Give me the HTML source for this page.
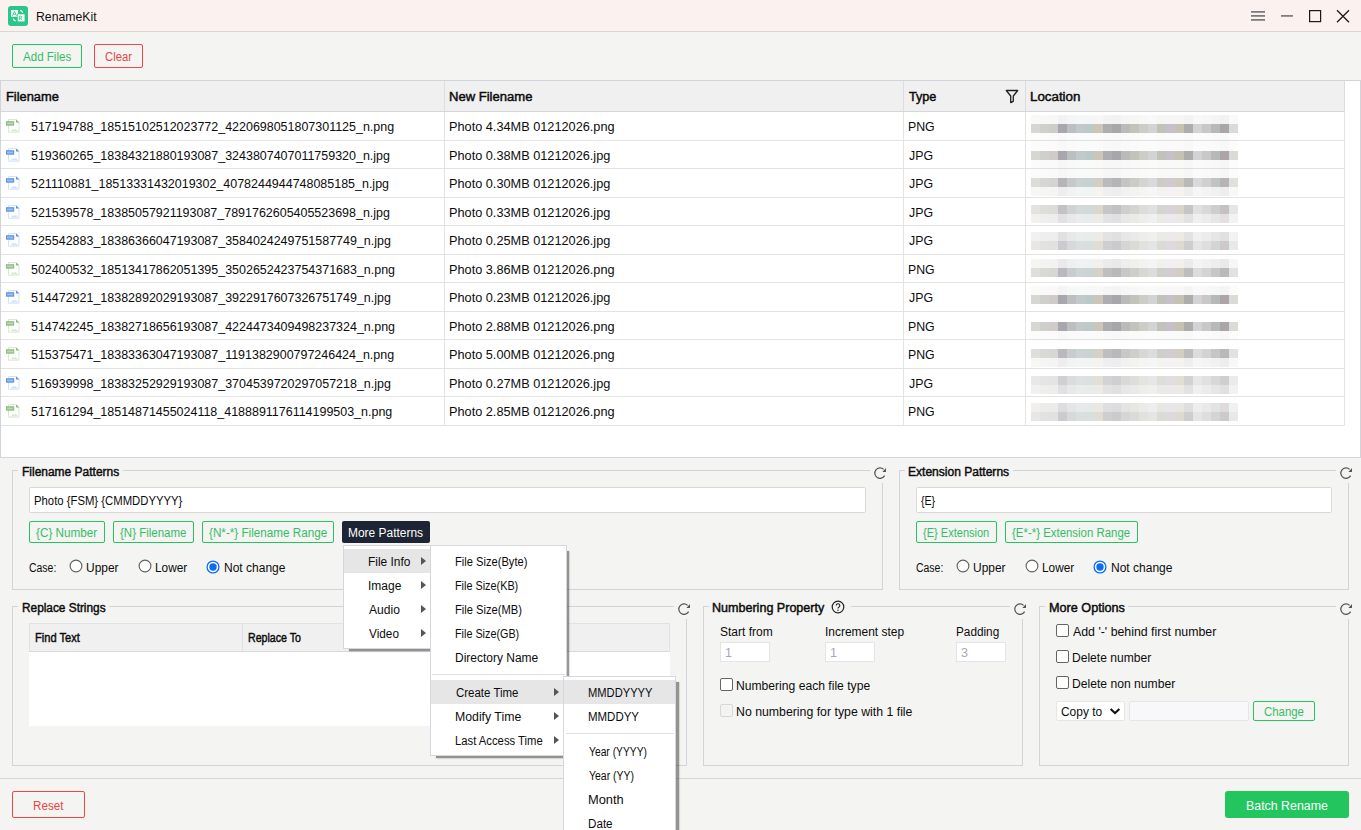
<!DOCTYPE html>
<html><head><meta charset="utf-8"><title>RenameKit</title><style>
*{margin:0;padding:0;box-sizing:border-box}
html,body{width:1361px;height:830px;overflow:hidden}
body{background:#f4f4f2;font-family:"Liberation Sans",sans-serif;font-size:12.5px;color:#0c0c0c;position:relative}
.a{position:absolute}
.t{position:absolute;white-space:nowrap;line-height:16px;transform-origin:0 0}
.b{font-weight:normal;-webkit-text-stroke:.45px currentColor}
.g{color:#3dba6c}
.btn{position:absolute;border:1px solid #25c460;border-radius:2px;color:#3fb96b;text-align:center;white-space:nowrap}
.red{border-color:#ee4646;color:#e84848}
.hl{background:#e6e6e6}
.gb{position:absolute;border:1px solid #d2d2d6;border-radius:1px}
.gbt{position:absolute;background:#f4f4f2;padding:0 5px 0 5px;font-weight:bold;line-height:16px;white-space:nowrap}
.vl{position:absolute;width:1px}
.hlin{position:absolute;height:1px}
.menu{position:absolute;background:#fff;border:1px solid #d6d6dc}
.shd{position:absolute;background:rgba(50,50,50,.5);box-shadow:0 0 1.5px 0.5px rgba(50,50,50,.45)}
.arr{position:absolute;width:0;height:0;border-top:4px solid transparent;border-bottom:4px solid transparent;border-left:5px solid #555}
.inp{position:absolute;background:#fff;border:1px solid #dcd8d6;border-radius:2px}
.radio{position:absolute;width:13px;height:13px;border-radius:50%;border:1px solid #5a5a5a;background:#fff}
.cb{position:absolute;width:13px;height:13px;border:1px solid #4a4a4a;border-radius:2px;background:#fff}
.refresh{position:absolute;width:14px;height:14px}
</style></head><body>
<div class="a" style="left:0;top:0;width:1361px;height:31px;background:#fbf1ee"></div>
<div class="hlin" style="left:0;top:31px;width:1361px;background:#d9d6d5"></div>
<svg class="a" style="left:8px;top:6px" width="20" height="20" viewBox="0 0 20 20">
<rect x="0" y="0" width="20" height="20" rx="3" fill="#2bc68c"/>
<rect x="3" y="4.1" width="7" height="6.6" fill="#fff"/>
<rect x="9.3" y="8" width="7.6" height="7.8" fill="#fff" stroke="#2bc68c" stroke-width=".6"/>
<path d="M4.4 9.8L6.5 5.3L8.6 9.8M5.3 8.3h2.4" stroke="#2bc68c" stroke-width=".85" fill="none"/>
<path d="M11.3 14.1V10.2h1.5a1 1 0 0 1 0 2h-1.5M12.8 12.2l1.1 1.9" stroke="#2bc68c" stroke-width=".85" fill="none"/>
<path d="M12.2 4.4Q14.3 4.9 14.8 6.9" stroke="#fff" stroke-width="1.1" fill="none"/>
<path d="M5.3 12.6Q5.6 14.6 7.8 15" stroke="#fff" stroke-width="1.1" fill="none"/>
</svg>
<div class="t " style="left:35.82px;top:8.92px;transform:scaleX(0.9811);color:#111">RenameKit</div>
<svg class="a" style="left:1245px;top:4px" width="116" height="24" viewBox="1245 4 116 24">
<path d="M1251 11.9h14M1251 15.9h14M1251 19.9h14" stroke="#7a7a7a" stroke-width="1.7"/>
<path d="M1281 15.9h12" stroke="#7a7a7a" stroke-width="1.7"/>
<rect x="1309.6" y="10.6" width="11" height="11" stroke="#1a1a1a" stroke-width="1.2" fill="none"/>
<path d="M1337 10.2L1349 22.2M1349 10.2L1337 22.2" stroke="#1a1a1a" stroke-width="1.3"/>
</svg>
<div class="btn" style="left:12px;top:44px;width:70px;height:24px"></div>
<div class="t " style="left:23.25px;top:49.12px;transform:scaleX(0.9256);color:#34be66">Add Files</div>
<div class="btn red" style="left:94px;top:44px;width:49px;height:24px"></div>
<div class="t " style="left:105.25px;top:49.12px;transform:scaleX(0.9004);color:#e84646">Clear</div>
<div class="a" style="left:0;top:80px;width:1361px;height:378px;background:#fff;border:1px solid #d3d3da"></div>
<div class="a" style="left:1px;top:81px;width:1343px;height:30px;background:#f0f0f0"></div>
<div class="hlin" style="left:1px;top:111px;width:1344px;background:#d6d6d9"></div>
<div class="vl" style="left:444px;top:81px;height:30px;background:#dddde0"></div>
<div class="vl" style="left:903px;top:81px;height:30px;background:#dddde0"></div>
<div class="vl" style="left:1025px;top:81px;height:30px;background:#dddde0"></div>
<div class="vl" style="left:1344px;top:81px;height:30px;background:#dddde0"></div>
<div class="t b" style="left:5.67px;top:88.67px;transform:scaleX(1.0286);">Filename</div>
<div class="t b" style="left:448.96px;top:88.67px;transform:scaleX(1.0439);">New Filename</div>
<div class="t b" style="left:908.60px;top:88.67px;transform:scaleX(1.0093);">Type</div>
<div class="t b" style="left:1029.93px;top:88.67px;transform:scaleX(1.0668);">Location</div>
<svg class="a" style="left:1004px;top:88px" width="16" height="16" viewBox="0 0 16 16"><path d="M2.3 2.5h11.4L9.3 8v5.3L6.7 14.6V8z" stroke="#222" stroke-width="1.3" fill="none" stroke-linejoin="round"/></svg>
<div class="hlin" style="left:1px;top:140px;width:1344px;background:#e3e3e3"></div>
<div class="vl" style="left:444px;top:112px;height:28px;background:#e3e3e3"></div>
<div class="vl" style="left:903px;top:112px;height:28px;background:#e3e3e3"></div>
<div class="vl" style="left:1025px;top:112px;height:28px;background:#e3e3e3"></div>
<div class="vl" style="left:1344px;top:112px;height:28px;background:#e3e3e3"></div>
<div class="a" style="left:5px;top:119px;width:15px;height:15px"><svg width="15" height="15" viewBox="0 0 15 15"><path d="M3.5 0.5h7.5l3 3v9.7h-10.5z" fill="#fff" stroke="#d8e9d2" stroke-width="1"/><path d="M11 0.2v3.3h3.3z" fill="#8dbd7c"/><rect x="1" y="2.2" width="8.2" height="4.5" fill="#8dbd7c"/><rect x="2" y="3.5" width="6.2" height="1.9" fill="#fff" opacity=".4"/><path d="M5.5 12.6l2.5-2.6 1.3 1.1 1.5-1.4 2.2 2.9z" fill="#d8e9d2"/></svg></div>
<div class="t " style="left:30.65px;top:118.67px;transform:scaleX(0.9974);">517194788_18515102512023772_4220698051807301125_n.png</div>
<div class="t " style="left:449.28px;top:118.67px;transform:scaleX(1.0180);">Photo 4.34MB 01212026.png</div>
<div class="t " style="left:908.01px;top:118.67px;transform:scaleX(0.9856);">PNG</div>
<div class="a" style="left:1031px;top:115px;width:207px;height:9px;background:linear-gradient(90deg,#d8d6d2 0px,#d8d6d2 9px,#cfd0cb 9px,#cfd0cb 18px,#cfcbcb 18px,#cfcbcb 27px,#a9a7ad 27px,#a9a7ad 36px,#bbbfc0 36px,#bbbfc0 45px,#c3c8ca 45px,#c3c8ca 54px,#bccac7 54px,#bccac7 63px,#cbc6b8 63px,#cbc6b8 72px,#aeaeb1 72px,#aeaeb1 81px,#a9a6aa 81px,#a9a6aa 90px,#b8bbba 90px,#b8bbba 99px,#c3c2bb 99px,#c3c2bb 108px,#cdcdc8 108px,#cdcdc8 117px,#d2d3d5 117px,#d2d3d5 126px,#c3c2ba 126px,#c3c2ba 135px,#c8c0c8 135px,#c8c0c8 144px,#c6c2b2 144px,#c6c2b2 153px,#aeadac 153px,#aeadac 162px,#d3d3d5 162px,#d3d3d5 171px,#c8c8c8 171px,#c8c8c8 180px,#b5b9b8 180px,#b5b9b8 189px,#aba5a9 189px,#aba5a9 198px,#dadbd7 198px,#dadbd7 207px);opacity:0.15"></div>
<div class="a" style="left:1031px;top:124px;width:207px;height:9px;background:linear-gradient(90deg,#d8d6d2 0px,#d8d6d2 9px,#cfd0cb 9px,#cfd0cb 18px,#cfcbcb 18px,#cfcbcb 27px,#a9a7ad 27px,#a9a7ad 36px,#bbbfc0 36px,#bbbfc0 45px,#c3c8ca 45px,#c3c8ca 54px,#bccac7 54px,#bccac7 63px,#cbc6b8 63px,#cbc6b8 72px,#aeaeb1 72px,#aeaeb1 81px,#a9a6aa 81px,#a9a6aa 90px,#b8bbba 90px,#b8bbba 99px,#c3c2bb 99px,#c3c2bb 108px,#cdcdc8 108px,#cdcdc8 117px,#d2d3d5 117px,#d2d3d5 126px,#c3c2ba 126px,#c3c2ba 135px,#c8c0c8 135px,#c8c0c8 144px,#c6c2b2 144px,#c6c2b2 153px,#aeadac 153px,#aeadac 162px,#d3d3d5 162px,#d3d3d5 171px,#c8c8c8 171px,#c8c8c8 180px,#b5b9b8 180px,#b5b9b8 189px,#aba5a9 189px,#aba5a9 198px,#dadbd7 198px,#dadbd7 207px);opacity:1.0"></div>
<div class="a" style="left:1031px;top:133px;width:207px;height:9px;background:linear-gradient(90deg,#d8d6d2 0px,#d8d6d2 9px,#cfd0cb 9px,#cfd0cb 18px,#cfcbcb 18px,#cfcbcb 27px,#a9a7ad 27px,#a9a7ad 36px,#bbbfc0 36px,#bbbfc0 45px,#c3c8ca 45px,#c3c8ca 54px,#bccac7 54px,#bccac7 63px,#cbc6b8 63px,#cbc6b8 72px,#aeaeb1 72px,#aeaeb1 81px,#a9a6aa 81px,#a9a6aa 90px,#b8bbba 90px,#b8bbba 99px,#c3c2bb 99px,#c3c2bb 108px,#cdcdc8 108px,#cdcdc8 117px,#d2d3d5 117px,#d2d3d5 126px,#c3c2ba 126px,#c3c2ba 135px,#c8c0c8 135px,#c8c0c8 144px,#c6c2b2 144px,#c6c2b2 153px,#aeadac 153px,#aeadac 162px,#d3d3d5 162px,#d3d3d5 171px,#c8c8c8 171px,#c8c8c8 180px,#b5b9b8 180px,#b5b9b8 189px,#aba5a9 189px,#aba5a9 198px,#dadbd7 198px,#dadbd7 207px);opacity:0.07"></div>
<div class="hlin" style="left:1px;top:168px;width:1344px;background:#e3e3e3"></div>
<div class="vl" style="left:444px;top:141px;height:27px;background:#e3e3e3"></div>
<div class="vl" style="left:903px;top:141px;height:27px;background:#e3e3e3"></div>
<div class="vl" style="left:1025px;top:141px;height:27px;background:#e3e3e3"></div>
<div class="vl" style="left:1344px;top:141px;height:27px;background:#e3e3e3"></div>
<div class="a" style="left:5px;top:148px;width:15px;height:15px"><svg width="15" height="15" viewBox="0 0 15 15"><path d="M3.5 0.5h7.5l3 3v9.7h-10.5z" fill="#fff" stroke="#d3e2f8" stroke-width="1"/><path d="M11 0.2v3.3h3.3z" fill="#5d93e4"/><rect x="1" y="2.2" width="8.2" height="4.5" fill="#5d93e4"/><rect x="2" y="3.5" width="6.2" height="1.9" fill="#fff" opacity=".4"/><path d="M5.5 12.6l2.5-2.6 1.3 1.1 1.5-1.4 2.2 2.9z" fill="#d3e2f8"/></svg></div>
<div class="t " style="left:30.65px;top:147.67px;transform:scaleX(0.9974);">519360265_18384321880193087_3243807407011759320_n.jpg</div>
<div class="t " style="left:449.28px;top:147.67px;transform:scaleX(1.0180);">Photo 0.38MB 01212026.jpg</div>
<div class="t " style="left:909.00px;top:147.67px;transform:scaleX(0.9856);">JPG</div>
<div class="a" style="left:1031px;top:142px;width:207px;height:9px;background:linear-gradient(90deg,#d8d6d2 0px,#d8d6d2 9px,#cfd0cb 9px,#cfd0cb 18px,#cfcbcb 18px,#cfcbcb 27px,#a9a7ad 27px,#a9a7ad 36px,#bbbfc0 36px,#bbbfc0 45px,#c3c8ca 45px,#c3c8ca 54px,#bccac7 54px,#bccac7 63px,#cbc6b8 63px,#cbc6b8 72px,#aeaeb1 72px,#aeaeb1 81px,#a9a6aa 81px,#a9a6aa 90px,#b8bbba 90px,#b8bbba 99px,#c3c2bb 99px,#c3c2bb 108px,#cdcdc8 108px,#cdcdc8 117px,#d2d3d5 117px,#d2d3d5 126px,#c3c2ba 126px,#c3c2ba 135px,#c8c0c8 135px,#c8c0c8 144px,#c6c2b2 144px,#c6c2b2 153px,#aeadac 153px,#aeadac 162px,#d3d3d5 162px,#d3d3d5 171px,#c8c8c8 171px,#c8c8c8 180px,#b5b9b8 180px,#b5b9b8 189px,#aba5a9 189px,#aba5a9 198px,#dadbd7 198px,#dadbd7 207px);opacity:0.08"></div>
<div class="a" style="left:1031px;top:151px;width:207px;height:9px;background:linear-gradient(90deg,#d8d6d2 0px,#d8d6d2 9px,#cfd0cb 9px,#cfd0cb 18px,#cfcbcb 18px,#cfcbcb 27px,#a9a7ad 27px,#a9a7ad 36px,#bbbfc0 36px,#bbbfc0 45px,#c3c8ca 45px,#c3c8ca 54px,#bccac7 54px,#bccac7 63px,#cbc6b8 63px,#cbc6b8 72px,#aeaeb1 72px,#aeaeb1 81px,#a9a6aa 81px,#a9a6aa 90px,#b8bbba 90px,#b8bbba 99px,#c3c2bb 99px,#c3c2bb 108px,#cdcdc8 108px,#cdcdc8 117px,#d2d3d5 117px,#d2d3d5 126px,#c3c2ba 126px,#c3c2ba 135px,#c8c0c8 135px,#c8c0c8 144px,#c6c2b2 144px,#c6c2b2 153px,#aeadac 153px,#aeadac 162px,#d3d3d5 162px,#d3d3d5 171px,#c8c8c8 171px,#c8c8c8 180px,#b5b9b8 180px,#b5b9b8 189px,#aba5a9 189px,#aba5a9 198px,#dadbd7 198px,#dadbd7 207px);opacity:1.0"></div>
<div class="a" style="left:1031px;top:160px;width:207px;height:9px;background:linear-gradient(90deg,#d8d6d2 0px,#d8d6d2 9px,#cfd0cb 9px,#cfd0cb 18px,#cfcbcb 18px,#cfcbcb 27px,#a9a7ad 27px,#a9a7ad 36px,#bbbfc0 36px,#bbbfc0 45px,#c3c8ca 45px,#c3c8ca 54px,#bccac7 54px,#bccac7 63px,#cbc6b8 63px,#cbc6b8 72px,#aeaeb1 72px,#aeaeb1 81px,#a9a6aa 81px,#a9a6aa 90px,#b8bbba 90px,#b8bbba 99px,#c3c2bb 99px,#c3c2bb 108px,#cdcdc8 108px,#cdcdc8 117px,#d2d3d5 117px,#d2d3d5 126px,#c3c2ba 126px,#c3c2ba 135px,#c8c0c8 135px,#c8c0c8 144px,#c6c2b2 144px,#c6c2b2 153px,#aeadac 153px,#aeadac 162px,#d3d3d5 162px,#d3d3d5 171px,#c8c8c8 171px,#c8c8c8 180px,#b5b9b8 180px,#b5b9b8 189px,#aba5a9 189px,#aba5a9 198px,#dadbd7 198px,#dadbd7 207px);opacity:0.1"></div>
<div class="hlin" style="left:1px;top:197px;width:1344px;background:#e3e3e3"></div>
<div class="vl" style="left:444px;top:169px;height:28px;background:#e3e3e3"></div>
<div class="vl" style="left:903px;top:169px;height:28px;background:#e3e3e3"></div>
<div class="vl" style="left:1025px;top:169px;height:28px;background:#e3e3e3"></div>
<div class="vl" style="left:1344px;top:169px;height:28px;background:#e3e3e3"></div>
<div class="a" style="left:5px;top:176px;width:15px;height:15px"><svg width="15" height="15" viewBox="0 0 15 15"><path d="M3.5 0.5h7.5l3 3v9.7h-10.5z" fill="#fff" stroke="#d3e2f8" stroke-width="1"/><path d="M11 0.2v3.3h3.3z" fill="#5d93e4"/><rect x="1" y="2.2" width="8.2" height="4.5" fill="#5d93e4"/><rect x="2" y="3.5" width="6.2" height="1.9" fill="#fff" opacity=".4"/><path d="M5.5 12.6l2.5-2.6 1.3 1.1 1.5-1.4 2.2 2.9z" fill="#d3e2f8"/></svg></div>
<div class="t " style="left:30.65px;top:175.67px;transform:scaleX(0.9974);">521110881_18513331432019302_4078244944748085185_n.jpg</div>
<div class="t " style="left:449.28px;top:175.67px;transform:scaleX(1.0180);">Photo 0.30MB 01212026.jpg</div>
<div class="t " style="left:909.00px;top:175.67px;transform:scaleX(0.9856);">JPG</div>
<div class="a" style="left:1031px;top:169px;width:207px;height:9px;background:linear-gradient(90deg,#d8d6d2 0px,#d8d6d2 9px,#cfd0cb 9px,#cfd0cb 18px,#cfcbcb 18px,#cfcbcb 27px,#a9a7ad 27px,#a9a7ad 36px,#bbbfc0 36px,#bbbfc0 45px,#c3c8ca 45px,#c3c8ca 54px,#bccac7 54px,#bccac7 63px,#cbc6b8 63px,#cbc6b8 72px,#aeaeb1 72px,#aeaeb1 81px,#a9a6aa 81px,#a9a6aa 90px,#b8bbba 90px,#b8bbba 99px,#c3c2bb 99px,#c3c2bb 108px,#cdcdc8 108px,#cdcdc8 117px,#d2d3d5 117px,#d2d3d5 126px,#c3c2ba 126px,#c3c2ba 135px,#c8c0c8 135px,#c8c0c8 144px,#c6c2b2 144px,#c6c2b2 153px,#aeadac 153px,#aeadac 162px,#d3d3d5 162px,#d3d3d5 171px,#c8c8c8 171px,#c8c8c8 180px,#b5b9b8 180px,#b5b9b8 189px,#aba5a9 189px,#aba5a9 198px,#dadbd7 198px,#dadbd7 207px);opacity:0.1"></div>
<div class="a" style="left:1031px;top:178px;width:207px;height:9px;background:linear-gradient(90deg,#d8d6d2 0px,#d8d6d2 9px,#cfd0cb 9px,#cfd0cb 18px,#cfcbcb 18px,#cfcbcb 27px,#a9a7ad 27px,#a9a7ad 36px,#bbbfc0 36px,#bbbfc0 45px,#c3c8ca 45px,#c3c8ca 54px,#bccac7 54px,#bccac7 63px,#cbc6b8 63px,#cbc6b8 72px,#aeaeb1 72px,#aeaeb1 81px,#a9a6aa 81px,#a9a6aa 90px,#b8bbba 90px,#b8bbba 99px,#c3c2bb 99px,#c3c2bb 108px,#cdcdc8 108px,#cdcdc8 117px,#d2d3d5 117px,#d2d3d5 126px,#c3c2ba 126px,#c3c2ba 135px,#c8c0c8 135px,#c8c0c8 144px,#c6c2b2 144px,#c6c2b2 153px,#aeadac 153px,#aeadac 162px,#d3d3d5 162px,#d3d3d5 171px,#c8c8c8 171px,#c8c8c8 180px,#b5b9b8 180px,#b5b9b8 189px,#aba5a9 189px,#aba5a9 198px,#dadbd7 198px,#dadbd7 207px);opacity:0.85"></div>
<div class="a" style="left:1031px;top:187px;width:207px;height:9px;background:linear-gradient(90deg,#d8d6d2 0px,#d8d6d2 9px,#cfd0cb 9px,#cfd0cb 18px,#cfcbcb 18px,#cfcbcb 27px,#a9a7ad 27px,#a9a7ad 36px,#bbbfc0 36px,#bbbfc0 45px,#c3c8ca 45px,#c3c8ca 54px,#bccac7 54px,#bccac7 63px,#cbc6b8 63px,#cbc6b8 72px,#aeaeb1 72px,#aeaeb1 81px,#a9a6aa 81px,#a9a6aa 90px,#b8bbba 90px,#b8bbba 99px,#c3c2bb 99px,#c3c2bb 108px,#cdcdc8 108px,#cdcdc8 117px,#d2d3d5 117px,#d2d3d5 126px,#c3c2ba 126px,#c3c2ba 135px,#c8c0c8 135px,#c8c0c8 144px,#c6c2b2 144px,#c6c2b2 153px,#aeadac 153px,#aeadac 162px,#d3d3d5 162px,#d3d3d5 171px,#c8c8c8 171px,#c8c8c8 180px,#b5b9b8 180px,#b5b9b8 189px,#aba5a9 189px,#aba5a9 198px,#dadbd7 198px,#dadbd7 207px);opacity:0.2"></div>
<div class="hlin" style="left:1px;top:225px;width:1344px;background:#e3e3e3"></div>
<div class="vl" style="left:444px;top:198px;height:27px;background:#e3e3e3"></div>
<div class="vl" style="left:903px;top:198px;height:27px;background:#e3e3e3"></div>
<div class="vl" style="left:1025px;top:198px;height:27px;background:#e3e3e3"></div>
<div class="vl" style="left:1344px;top:198px;height:27px;background:#e3e3e3"></div>
<div class="a" style="left:5px;top:205px;width:15px;height:15px"><svg width="15" height="15" viewBox="0 0 15 15"><path d="M3.5 0.5h7.5l3 3v9.7h-10.5z" fill="#fff" stroke="#d3e2f8" stroke-width="1"/><path d="M11 0.2v3.3h3.3z" fill="#5d93e4"/><rect x="1" y="2.2" width="8.2" height="4.5" fill="#5d93e4"/><rect x="2" y="3.5" width="6.2" height="1.9" fill="#fff" opacity=".4"/><path d="M5.5 12.6l2.5-2.6 1.3 1.1 1.5-1.4 2.2 2.9z" fill="#d3e2f8"/></svg></div>
<div class="t " style="left:30.65px;top:204.67px;transform:scaleX(0.9974);">521539578_18385057921193087_7891762605405523698_n.jpg</div>
<div class="t " style="left:449.28px;top:204.67px;transform:scaleX(1.0180);">Photo 0.33MB 01212026.jpg</div>
<div class="t " style="left:909.00px;top:204.67px;transform:scaleX(0.9856);">JPG</div>
<div class="a" style="left:1031px;top:205px;width:207px;height:9px;background:linear-gradient(90deg,#d8d6d2 0px,#d8d6d2 9px,#cfd0cb 9px,#cfd0cb 18px,#cfcbcb 18px,#cfcbcb 27px,#a9a7ad 27px,#a9a7ad 36px,#bbbfc0 36px,#bbbfc0 45px,#c3c8ca 45px,#c3c8ca 54px,#bccac7 54px,#bccac7 63px,#cbc6b8 63px,#cbc6b8 72px,#aeaeb1 72px,#aeaeb1 81px,#a9a6aa 81px,#a9a6aa 90px,#b8bbba 90px,#b8bbba 99px,#c3c2bb 99px,#c3c2bb 108px,#cdcdc8 108px,#cdcdc8 117px,#d2d3d5 117px,#d2d3d5 126px,#c3c2ba 126px,#c3c2ba 135px,#c8c0c8 135px,#c8c0c8 144px,#c6c2b2 144px,#c6c2b2 153px,#aeadac 153px,#aeadac 162px,#d3d3d5 162px,#d3d3d5 171px,#c8c8c8 171px,#c8c8c8 180px,#b5b9b8 180px,#b5b9b8 189px,#aba5a9 189px,#aba5a9 198px,#dadbd7 198px,#dadbd7 207px);opacity:0.7"></div>
<div class="a" style="left:1031px;top:214px;width:207px;height:9px;background:linear-gradient(90deg,#d8d6d2 0px,#d8d6d2 9px,#cfd0cb 9px,#cfd0cb 18px,#cfcbcb 18px,#cfcbcb 27px,#a9a7ad 27px,#a9a7ad 36px,#bbbfc0 36px,#bbbfc0 45px,#c3c8ca 45px,#c3c8ca 54px,#bccac7 54px,#bccac7 63px,#cbc6b8 63px,#cbc6b8 72px,#aeaeb1 72px,#aeaeb1 81px,#a9a6aa 81px,#a9a6aa 90px,#b8bbba 90px,#b8bbba 99px,#c3c2bb 99px,#c3c2bb 108px,#cdcdc8 108px,#cdcdc8 117px,#d2d3d5 117px,#d2d3d5 126px,#c3c2ba 126px,#c3c2ba 135px,#c8c0c8 135px,#c8c0c8 144px,#c6c2b2 144px,#c6c2b2 153px,#aeadac 153px,#aeadac 162px,#d3d3d5 162px,#d3d3d5 171px,#c8c8c8 171px,#c8c8c8 180px,#b5b9b8 180px,#b5b9b8 189px,#aba5a9 189px,#aba5a9 198px,#dadbd7 198px,#dadbd7 207px);opacity:0.35"></div>
<div class="hlin" style="left:1px;top:254px;width:1344px;background:#e3e3e3"></div>
<div class="vl" style="left:444px;top:226px;height:28px;background:#e3e3e3"></div>
<div class="vl" style="left:903px;top:226px;height:28px;background:#e3e3e3"></div>
<div class="vl" style="left:1025px;top:226px;height:28px;background:#e3e3e3"></div>
<div class="vl" style="left:1344px;top:226px;height:28px;background:#e3e3e3"></div>
<div class="a" style="left:5px;top:233px;width:15px;height:15px"><svg width="15" height="15" viewBox="0 0 15 15"><path d="M3.5 0.5h7.5l3 3v9.7h-10.5z" fill="#fff" stroke="#d3e2f8" stroke-width="1"/><path d="M11 0.2v3.3h3.3z" fill="#5d93e4"/><rect x="1" y="2.2" width="8.2" height="4.5" fill="#5d93e4"/><rect x="2" y="3.5" width="6.2" height="1.9" fill="#fff" opacity=".4"/><path d="M5.5 12.6l2.5-2.6 1.3 1.1 1.5-1.4 2.2 2.9z" fill="#d3e2f8"/></svg></div>
<div class="t " style="left:30.65px;top:232.67px;transform:scaleX(0.9974);">525542883_18386366047193087_3584024249751587749_n.jpg</div>
<div class="t " style="left:449.28px;top:232.67px;transform:scaleX(1.0180);">Photo 0.25MB 01212026.jpg</div>
<div class="t " style="left:909.00px;top:232.67px;transform:scaleX(0.9856);">JPG</div>
<div class="a" style="left:1031px;top:232px;width:207px;height:9px;background:linear-gradient(90deg,#d8d6d2 0px,#d8d6d2 9px,#cfd0cb 9px,#cfd0cb 18px,#cfcbcb 18px,#cfcbcb 27px,#a9a7ad 27px,#a9a7ad 36px,#bbbfc0 36px,#bbbfc0 45px,#c3c8ca 45px,#c3c8ca 54px,#bccac7 54px,#bccac7 63px,#cbc6b8 63px,#cbc6b8 72px,#aeaeb1 72px,#aeaeb1 81px,#a9a6aa 81px,#a9a6aa 90px,#b8bbba 90px,#b8bbba 99px,#c3c2bb 99px,#c3c2bb 108px,#cdcdc8 108px,#cdcdc8 117px,#d2d3d5 117px,#d2d3d5 126px,#c3c2ba 126px,#c3c2ba 135px,#c8c0c8 135px,#c8c0c8 144px,#c6c2b2 144px,#c6c2b2 153px,#aeadac 153px,#aeadac 162px,#d3d3d5 162px,#d3d3d5 171px,#c8c8c8 171px,#c8c8c8 180px,#b5b9b8 180px,#b5b9b8 189px,#aba5a9 189px,#aba5a9 198px,#dadbd7 198px,#dadbd7 207px);opacity:0.35"></div>
<div class="a" style="left:1031px;top:241px;width:207px;height:9px;background:linear-gradient(90deg,#d8d6d2 0px,#d8d6d2 9px,#cfd0cb 9px,#cfd0cb 18px,#cfcbcb 18px,#cfcbcb 27px,#a9a7ad 27px,#a9a7ad 36px,#bbbfc0 36px,#bbbfc0 45px,#c3c8ca 45px,#c3c8ca 54px,#bccac7 54px,#bccac7 63px,#cbc6b8 63px,#cbc6b8 72px,#aeaeb1 72px,#aeaeb1 81px,#a9a6aa 81px,#a9a6aa 90px,#b8bbba 90px,#b8bbba 99px,#c3c2bb 99px,#c3c2bb 108px,#cdcdc8 108px,#cdcdc8 117px,#d2d3d5 117px,#d2d3d5 126px,#c3c2ba 126px,#c3c2ba 135px,#c8c0c8 135px,#c8c0c8 144px,#c6c2b2 144px,#c6c2b2 153px,#aeadac 153px,#aeadac 162px,#d3d3d5 162px,#d3d3d5 171px,#c8c8c8 171px,#c8c8c8 180px,#b5b9b8 180px,#b5b9b8 189px,#aba5a9 189px,#aba5a9 198px,#dadbd7 198px,#dadbd7 207px);opacity:0.6"></div>
<div class="hlin" style="left:1px;top:282px;width:1344px;background:#e3e3e3"></div>
<div class="vl" style="left:444px;top:255px;height:27px;background:#e3e3e3"></div>
<div class="vl" style="left:903px;top:255px;height:27px;background:#e3e3e3"></div>
<div class="vl" style="left:1025px;top:255px;height:27px;background:#e3e3e3"></div>
<div class="vl" style="left:1344px;top:255px;height:27px;background:#e3e3e3"></div>
<div class="a" style="left:5px;top:262px;width:15px;height:15px"><svg width="15" height="15" viewBox="0 0 15 15"><path d="M3.5 0.5h7.5l3 3v9.7h-10.5z" fill="#fff" stroke="#d8e9d2" stroke-width="1"/><path d="M11 0.2v3.3h3.3z" fill="#8dbd7c"/><rect x="1" y="2.2" width="8.2" height="4.5" fill="#8dbd7c"/><rect x="2" y="3.5" width="6.2" height="1.9" fill="#fff" opacity=".4"/><path d="M5.5 12.6l2.5-2.6 1.3 1.1 1.5-1.4 2.2 2.9z" fill="#d8e9d2"/></svg></div>
<div class="t " style="left:30.65px;top:261.67px;transform:scaleX(0.9974);">502400532_18513417862051395_3502652423754371683_n.png</div>
<div class="t " style="left:449.28px;top:261.67px;transform:scaleX(1.0180);">Photo 3.86MB 01212026.png</div>
<div class="t " style="left:908.01px;top:261.67px;transform:scaleX(0.9856);">PNG</div>
<div class="a" style="left:1031px;top:259px;width:207px;height:9px;background:linear-gradient(90deg,#d8d6d2 0px,#d8d6d2 9px,#cfd0cb 9px,#cfd0cb 18px,#cfcbcb 18px,#cfcbcb 27px,#a9a7ad 27px,#a9a7ad 36px,#bbbfc0 36px,#bbbfc0 45px,#c3c8ca 45px,#c3c8ca 54px,#bccac7 54px,#bccac7 63px,#cbc6b8 63px,#cbc6b8 72px,#aeaeb1 72px,#aeaeb1 81px,#a9a6aa 81px,#a9a6aa 90px,#b8bbba 90px,#b8bbba 99px,#c3c2bb 99px,#c3c2bb 108px,#cdcdc8 108px,#cdcdc8 117px,#d2d3d5 117px,#d2d3d5 126px,#c3c2ba 126px,#c3c2ba 135px,#c8c0c8 135px,#c8c0c8 144px,#c6c2b2 144px,#c6c2b2 153px,#aeadac 153px,#aeadac 162px,#d3d3d5 162px,#d3d3d5 171px,#c8c8c8 171px,#c8c8c8 180px,#b5b9b8 180px,#b5b9b8 189px,#aba5a9 189px,#aba5a9 198px,#dadbd7 198px,#dadbd7 207px);opacity:0.25"></div>
<div class="a" style="left:1031px;top:268px;width:207px;height:9px;background:linear-gradient(90deg,#d8d6d2 0px,#d8d6d2 9px,#cfd0cb 9px,#cfd0cb 18px,#cfcbcb 18px,#cfcbcb 27px,#a9a7ad 27px,#a9a7ad 36px,#bbbfc0 36px,#bbbfc0 45px,#c3c8ca 45px,#c3c8ca 54px,#bccac7 54px,#bccac7 63px,#cbc6b8 63px,#cbc6b8 72px,#aeaeb1 72px,#aeaeb1 81px,#a9a6aa 81px,#a9a6aa 90px,#b8bbba 90px,#b8bbba 99px,#c3c2bb 99px,#c3c2bb 108px,#cdcdc8 108px,#cdcdc8 117px,#d2d3d5 117px,#d2d3d5 126px,#c3c2ba 126px,#c3c2ba 135px,#c8c0c8 135px,#c8c0c8 144px,#c6c2b2 144px,#c6c2b2 153px,#aeadac 153px,#aeadac 162px,#d3d3d5 162px,#d3d3d5 171px,#c8c8c8 171px,#c8c8c8 180px,#b5b9b8 180px,#b5b9b8 189px,#aba5a9 189px,#aba5a9 198px,#dadbd7 198px,#dadbd7 207px);opacity:0.8"></div>
<div class="hlin" style="left:1px;top:311px;width:1344px;background:#e3e3e3"></div>
<div class="vl" style="left:444px;top:283px;height:28px;background:#e3e3e3"></div>
<div class="vl" style="left:903px;top:283px;height:28px;background:#e3e3e3"></div>
<div class="vl" style="left:1025px;top:283px;height:28px;background:#e3e3e3"></div>
<div class="vl" style="left:1344px;top:283px;height:28px;background:#e3e3e3"></div>
<div class="a" style="left:5px;top:290px;width:15px;height:15px"><svg width="15" height="15" viewBox="0 0 15 15"><path d="M3.5 0.5h7.5l3 3v9.7h-10.5z" fill="#fff" stroke="#d3e2f8" stroke-width="1"/><path d="M11 0.2v3.3h3.3z" fill="#5d93e4"/><rect x="1" y="2.2" width="8.2" height="4.5" fill="#5d93e4"/><rect x="2" y="3.5" width="6.2" height="1.9" fill="#fff" opacity=".4"/><path d="M5.5 12.6l2.5-2.6 1.3 1.1 1.5-1.4 2.2 2.9z" fill="#d3e2f8"/></svg></div>
<div class="t " style="left:30.65px;top:289.67px;transform:scaleX(0.9974);">514472921_18382892029193087_3922917607326751749_n.jpg</div>
<div class="t " style="left:449.28px;top:289.67px;transform:scaleX(1.0180);">Photo 0.23MB 01212026.jpg</div>
<div class="t " style="left:909.00px;top:289.67px;transform:scaleX(0.9856);">JPG</div>
<div class="a" style="left:1031px;top:286px;width:207px;height:9px;background:linear-gradient(90deg,#d8d6d2 0px,#d8d6d2 9px,#cfd0cb 9px,#cfd0cb 18px,#cfcbcb 18px,#cfcbcb 27px,#a9a7ad 27px,#a9a7ad 36px,#bbbfc0 36px,#bbbfc0 45px,#c3c8ca 45px,#c3c8ca 54px,#bccac7 54px,#bccac7 63px,#cbc6b8 63px,#cbc6b8 72px,#aeaeb1 72px,#aeaeb1 81px,#a9a6aa 81px,#a9a6aa 90px,#b8bbba 90px,#b8bbba 99px,#c3c2bb 99px,#c3c2bb 108px,#cdcdc8 108px,#cdcdc8 117px,#d2d3d5 117px,#d2d3d5 126px,#c3c2ba 126px,#c3c2ba 135px,#c8c0c8 135px,#c8c0c8 144px,#c6c2b2 144px,#c6c2b2 153px,#aeadac 153px,#aeadac 162px,#d3d3d5 162px,#d3d3d5 171px,#c8c8c8 171px,#c8c8c8 180px,#b5b9b8 180px,#b5b9b8 189px,#aba5a9 189px,#aba5a9 198px,#dadbd7 198px,#dadbd7 207px);opacity:0.12"></div>
<div class="a" style="left:1031px;top:295px;width:207px;height:9px;background:linear-gradient(90deg,#d8d6d2 0px,#d8d6d2 9px,#cfd0cb 9px,#cfd0cb 18px,#cfcbcb 18px,#cfcbcb 27px,#a9a7ad 27px,#a9a7ad 36px,#bbbfc0 36px,#bbbfc0 45px,#c3c8ca 45px,#c3c8ca 54px,#bccac7 54px,#bccac7 63px,#cbc6b8 63px,#cbc6b8 72px,#aeaeb1 72px,#aeaeb1 81px,#a9a6aa 81px,#a9a6aa 90px,#b8bbba 90px,#b8bbba 99px,#c3c2bb 99px,#c3c2bb 108px,#cdcdc8 108px,#cdcdc8 117px,#d2d3d5 117px,#d2d3d5 126px,#c3c2ba 126px,#c3c2ba 135px,#c8c0c8 135px,#c8c0c8 144px,#c6c2b2 144px,#c6c2b2 153px,#aeadac 153px,#aeadac 162px,#d3d3d5 162px,#d3d3d5 171px,#c8c8c8 171px,#c8c8c8 180px,#b5b9b8 180px,#b5b9b8 189px,#aba5a9 189px,#aba5a9 198px,#dadbd7 198px,#dadbd7 207px);opacity:1.0"></div>
<div class="hlin" style="left:1px;top:339px;width:1344px;background:#e3e3e3"></div>
<div class="vl" style="left:444px;top:312px;height:27px;background:#e3e3e3"></div>
<div class="vl" style="left:903px;top:312px;height:27px;background:#e3e3e3"></div>
<div class="vl" style="left:1025px;top:312px;height:27px;background:#e3e3e3"></div>
<div class="vl" style="left:1344px;top:312px;height:27px;background:#e3e3e3"></div>
<div class="a" style="left:5px;top:319px;width:15px;height:15px"><svg width="15" height="15" viewBox="0 0 15 15"><path d="M3.5 0.5h7.5l3 3v9.7h-10.5z" fill="#fff" stroke="#d8e9d2" stroke-width="1"/><path d="M11 0.2v3.3h3.3z" fill="#8dbd7c"/><rect x="1" y="2.2" width="8.2" height="4.5" fill="#8dbd7c"/><rect x="2" y="3.5" width="6.2" height="1.9" fill="#fff" opacity=".4"/><path d="M5.5 12.6l2.5-2.6 1.3 1.1 1.5-1.4 2.2 2.9z" fill="#d8e9d2"/></svg></div>
<div class="t " style="left:30.65px;top:318.67px;transform:scaleX(0.9974);">514742245_18382718656193087_4224473409498237324_n.png</div>
<div class="t " style="left:449.28px;top:318.67px;transform:scaleX(1.0180);">Photo 2.88MB 01212026.png</div>
<div class="t " style="left:908.01px;top:318.67px;transform:scaleX(0.9856);">PNG</div>
<div class="a" style="left:1031px;top:322px;width:207px;height:9px;background:linear-gradient(90deg,#d8d6d2 0px,#d8d6d2 9px,#cfd0cb 9px,#cfd0cb 18px,#cfcbcb 18px,#cfcbcb 27px,#a9a7ad 27px,#a9a7ad 36px,#bbbfc0 36px,#bbbfc0 45px,#c3c8ca 45px,#c3c8ca 54px,#bccac7 54px,#bccac7 63px,#cbc6b8 63px,#cbc6b8 72px,#aeaeb1 72px,#aeaeb1 81px,#a9a6aa 81px,#a9a6aa 90px,#b8bbba 90px,#b8bbba 99px,#c3c2bb 99px,#c3c2bb 108px,#cdcdc8 108px,#cdcdc8 117px,#d2d3d5 117px,#d2d3d5 126px,#c3c2ba 126px,#c3c2ba 135px,#c8c0c8 135px,#c8c0c8 144px,#c6c2b2 144px,#c6c2b2 153px,#aeadac 153px,#aeadac 162px,#d3d3d5 162px,#d3d3d5 171px,#c8c8c8 171px,#c8c8c8 180px,#b5b9b8 180px,#b5b9b8 189px,#aba5a9 189px,#aba5a9 198px,#dadbd7 198px,#dadbd7 207px);opacity:1.0"></div>
<div class="a" style="left:1031px;top:331px;width:207px;height:9px;background:linear-gradient(90deg,#d8d6d2 0px,#d8d6d2 9px,#cfd0cb 9px,#cfd0cb 18px,#cfcbcb 18px,#cfcbcb 27px,#a9a7ad 27px,#a9a7ad 36px,#bbbfc0 36px,#bbbfc0 45px,#c3c8ca 45px,#c3c8ca 54px,#bccac7 54px,#bccac7 63px,#cbc6b8 63px,#cbc6b8 72px,#aeaeb1 72px,#aeaeb1 81px,#a9a6aa 81px,#a9a6aa 90px,#b8bbba 90px,#b8bbba 99px,#c3c2bb 99px,#c3c2bb 108px,#cdcdc8 108px,#cdcdc8 117px,#d2d3d5 117px,#d2d3d5 126px,#c3c2ba 126px,#c3c2ba 135px,#c8c0c8 135px,#c8c0c8 144px,#c6c2b2 144px,#c6c2b2 153px,#aeadac 153px,#aeadac 162px,#d3d3d5 162px,#d3d3d5 171px,#c8c8c8 171px,#c8c8c8 180px,#b5b9b8 180px,#b5b9b8 189px,#aba5a9 189px,#aba5a9 198px,#dadbd7 198px,#dadbd7 207px);opacity:0.08"></div>
<div class="hlin" style="left:1px;top:368px;width:1344px;background:#e3e3e3"></div>
<div class="vl" style="left:444px;top:340px;height:28px;background:#e3e3e3"></div>
<div class="vl" style="left:903px;top:340px;height:28px;background:#e3e3e3"></div>
<div class="vl" style="left:1025px;top:340px;height:28px;background:#e3e3e3"></div>
<div class="vl" style="left:1344px;top:340px;height:28px;background:#e3e3e3"></div>
<div class="a" style="left:5px;top:347px;width:15px;height:15px"><svg width="15" height="15" viewBox="0 0 15 15"><path d="M3.5 0.5h7.5l3 3v9.7h-10.5z" fill="#fff" stroke="#d8e9d2" stroke-width="1"/><path d="M11 0.2v3.3h3.3z" fill="#8dbd7c"/><rect x="1" y="2.2" width="8.2" height="4.5" fill="#8dbd7c"/><rect x="2" y="3.5" width="6.2" height="1.9" fill="#fff" opacity=".4"/><path d="M5.5 12.6l2.5-2.6 1.3 1.1 1.5-1.4 2.2 2.9z" fill="#d8e9d2"/></svg></div>
<div class="t " style="left:30.65px;top:346.67px;transform:scaleX(0.9974);">515375471_18383363047193087_1191382900797246424_n.png</div>
<div class="t " style="left:449.28px;top:346.67px;transform:scaleX(1.0180);">Photo 5.00MB 01212026.png</div>
<div class="t " style="left:908.01px;top:346.67px;transform:scaleX(0.9856);">PNG</div>
<div class="a" style="left:1031px;top:349px;width:207px;height:9px;background:linear-gradient(90deg,#d8d6d2 0px,#d8d6d2 9px,#cfd0cb 9px,#cfd0cb 18px,#cfcbcb 18px,#cfcbcb 27px,#a9a7ad 27px,#a9a7ad 36px,#bbbfc0 36px,#bbbfc0 45px,#c3c8ca 45px,#c3c8ca 54px,#bccac7 54px,#bccac7 63px,#cbc6b8 63px,#cbc6b8 72px,#aeaeb1 72px,#aeaeb1 81px,#a9a6aa 81px,#a9a6aa 90px,#b8bbba 90px,#b8bbba 99px,#c3c2bb 99px,#c3c2bb 108px,#cdcdc8 108px,#cdcdc8 117px,#d2d3d5 117px,#d2d3d5 126px,#c3c2ba 126px,#c3c2ba 135px,#c8c0c8 135px,#c8c0c8 144px,#c6c2b2 144px,#c6c2b2 153px,#aeadac 153px,#aeadac 162px,#d3d3d5 162px,#d3d3d5 171px,#c8c8c8 171px,#c8c8c8 180px,#b5b9b8 180px,#b5b9b8 189px,#aba5a9 189px,#aba5a9 198px,#dadbd7 198px,#dadbd7 207px);opacity:0.8"></div>
<div class="a" style="left:1031px;top:358px;width:207px;height:9px;background:linear-gradient(90deg,#d8d6d2 0px,#d8d6d2 9px,#cfd0cb 9px,#cfd0cb 18px,#cfcbcb 18px,#cfcbcb 27px,#a9a7ad 27px,#a9a7ad 36px,#bbbfc0 36px,#bbbfc0 45px,#c3c8ca 45px,#c3c8ca 54px,#bccac7 54px,#bccac7 63px,#cbc6b8 63px,#cbc6b8 72px,#aeaeb1 72px,#aeaeb1 81px,#a9a6aa 81px,#a9a6aa 90px,#b8bbba 90px,#b8bbba 99px,#c3c2bb 99px,#c3c2bb 108px,#cdcdc8 108px,#cdcdc8 117px,#d2d3d5 117px,#d2d3d5 126px,#c3c2ba 126px,#c3c2ba 135px,#c8c0c8 135px,#c8c0c8 144px,#c6c2b2 144px,#c6c2b2 153px,#aeadac 153px,#aeadac 162px,#d3d3d5 162px,#d3d3d5 171px,#c8c8c8 171px,#c8c8c8 180px,#b5b9b8 180px,#b5b9b8 189px,#aba5a9 189px,#aba5a9 198px,#dadbd7 198px,#dadbd7 207px);opacity:0.2"></div>
<div class="hlin" style="left:1px;top:396px;width:1344px;background:#e3e3e3"></div>
<div class="vl" style="left:444px;top:369px;height:27px;background:#e3e3e3"></div>
<div class="vl" style="left:903px;top:369px;height:27px;background:#e3e3e3"></div>
<div class="vl" style="left:1025px;top:369px;height:27px;background:#e3e3e3"></div>
<div class="vl" style="left:1344px;top:369px;height:27px;background:#e3e3e3"></div>
<div class="a" style="left:5px;top:376px;width:15px;height:15px"><svg width="15" height="15" viewBox="0 0 15 15"><path d="M3.5 0.5h7.5l3 3v9.7h-10.5z" fill="#fff" stroke="#d3e2f8" stroke-width="1"/><path d="M11 0.2v3.3h3.3z" fill="#5d93e4"/><rect x="1" y="2.2" width="8.2" height="4.5" fill="#5d93e4"/><rect x="2" y="3.5" width="6.2" height="1.9" fill="#fff" opacity=".4"/><path d="M5.5 12.6l2.5-2.6 1.3 1.1 1.5-1.4 2.2 2.9z" fill="#d3e2f8"/></svg></div>
<div class="t " style="left:30.65px;top:375.67px;transform:scaleX(0.9974);">516939998_18383252929193087_3704539720297057218_n.jpg</div>
<div class="t " style="left:449.28px;top:375.67px;transform:scaleX(1.0180);">Photo 0.27MB 01212026.jpg</div>
<div class="t " style="left:909.00px;top:375.67px;transform:scaleX(0.9856);">JPG</div>
<div class="a" style="left:1031px;top:376px;width:207px;height:9px;background:linear-gradient(90deg,#d8d6d2 0px,#d8d6d2 9px,#cfd0cb 9px,#cfd0cb 18px,#cfcbcb 18px,#cfcbcb 27px,#a9a7ad 27px,#a9a7ad 36px,#bbbfc0 36px,#bbbfc0 45px,#c3c8ca 45px,#c3c8ca 54px,#bccac7 54px,#bccac7 63px,#cbc6b8 63px,#cbc6b8 72px,#aeaeb1 72px,#aeaeb1 81px,#a9a6aa 81px,#a9a6aa 90px,#b8bbba 90px,#b8bbba 99px,#c3c2bb 99px,#c3c2bb 108px,#cdcdc8 108px,#cdcdc8 117px,#d2d3d5 117px,#d2d3d5 126px,#c3c2ba 126px,#c3c2ba 135px,#c8c0c8 135px,#c8c0c8 144px,#c6c2b2 144px,#c6c2b2 153px,#aeadac 153px,#aeadac 162px,#d3d3d5 162px,#d3d3d5 171px,#c8c8c8 171px,#c8c8c8 180px,#b5b9b8 180px,#b5b9b8 189px,#aba5a9 189px,#aba5a9 198px,#dadbd7 198px,#dadbd7 207px);opacity:0.55"></div>
<div class="a" style="left:1031px;top:385px;width:207px;height:9px;background:linear-gradient(90deg,#d8d6d2 0px,#d8d6d2 9px,#cfd0cb 9px,#cfd0cb 18px,#cfcbcb 18px,#cfcbcb 27px,#a9a7ad 27px,#a9a7ad 36px,#bbbfc0 36px,#bbbfc0 45px,#c3c8ca 45px,#c3c8ca 54px,#bccac7 54px,#bccac7 63px,#cbc6b8 63px,#cbc6b8 72px,#aeaeb1 72px,#aeaeb1 81px,#a9a6aa 81px,#a9a6aa 90px,#b8bbba 90px,#b8bbba 99px,#c3c2bb 99px,#c3c2bb 108px,#cdcdc8 108px,#cdcdc8 117px,#d2d3d5 117px,#d2d3d5 126px,#c3c2ba 126px,#c3c2ba 135px,#c8c0c8 135px,#c8c0c8 144px,#c6c2b2 144px,#c6c2b2 153px,#aeadac 153px,#aeadac 162px,#d3d3d5 162px,#d3d3d5 171px,#c8c8c8 171px,#c8c8c8 180px,#b5b9b8 180px,#b5b9b8 189px,#aba5a9 189px,#aba5a9 198px,#dadbd7 198px,#dadbd7 207px);opacity:0.35"></div>
<div class="hlin" style="left:1px;top:425px;width:1344px;background:#e3e3e3"></div>
<div class="vl" style="left:444px;top:397px;height:28px;background:#e3e3e3"></div>
<div class="vl" style="left:903px;top:397px;height:28px;background:#e3e3e3"></div>
<div class="vl" style="left:1025px;top:397px;height:28px;background:#e3e3e3"></div>
<div class="vl" style="left:1344px;top:397px;height:28px;background:#e3e3e3"></div>
<div class="a" style="left:5px;top:404px;width:15px;height:15px"><svg width="15" height="15" viewBox="0 0 15 15"><path d="M3.5 0.5h7.5l3 3v9.7h-10.5z" fill="#fff" stroke="#d8e9d2" stroke-width="1"/><path d="M11 0.2v3.3h3.3z" fill="#8dbd7c"/><rect x="1" y="2.2" width="8.2" height="4.5" fill="#8dbd7c"/><rect x="2" y="3.5" width="6.2" height="1.9" fill="#fff" opacity=".4"/><path d="M5.5 12.6l2.5-2.6 1.3 1.1 1.5-1.4 2.2 2.9z" fill="#d8e9d2"/></svg></div>
<div class="t " style="left:30.65px;top:403.67px;transform:scaleX(0.9974);">517161294_18514871455024118_4188891176114199503_n.png</div>
<div class="t " style="left:449.28px;top:403.67px;transform:scaleX(1.0180);">Photo 2.85MB 01212026.png</div>
<div class="t " style="left:908.01px;top:403.67px;transform:scaleX(0.9856);">PNG</div>
<div class="a" style="left:1031px;top:403px;width:207px;height:9px;background:linear-gradient(90deg,#d8d6d2 0px,#d8d6d2 9px,#cfd0cb 9px,#cfd0cb 18px,#cfcbcb 18px,#cfcbcb 27px,#a9a7ad 27px,#a9a7ad 36px,#bbbfc0 36px,#bbbfc0 45px,#c3c8ca 45px,#c3c8ca 54px,#bccac7 54px,#bccac7 63px,#cbc6b8 63px,#cbc6b8 72px,#aeaeb1 72px,#aeaeb1 81px,#a9a6aa 81px,#a9a6aa 90px,#b8bbba 90px,#b8bbba 99px,#c3c2bb 99px,#c3c2bb 108px,#cdcdc8 108px,#cdcdc8 117px,#d2d3d5 117px,#d2d3d5 126px,#c3c2ba 126px,#c3c2ba 135px,#c8c0c8 135px,#c8c0c8 144px,#c6c2b2 144px,#c6c2b2 153px,#aeadac 153px,#aeadac 162px,#d3d3d5 162px,#d3d3d5 171px,#c8c8c8 171px,#c8c8c8 180px,#b5b9b8 180px,#b5b9b8 189px,#aba5a9 189px,#aba5a9 198px,#dadbd7 198px,#dadbd7 207px);opacity:0.4"></div>
<div class="a" style="left:1031px;top:412px;width:207px;height:9px;background:linear-gradient(90deg,#d8d6d2 0px,#d8d6d2 9px,#cfd0cb 9px,#cfd0cb 18px,#cfcbcb 18px,#cfcbcb 27px,#a9a7ad 27px,#a9a7ad 36px,#bbbfc0 36px,#bbbfc0 45px,#c3c8ca 45px,#c3c8ca 54px,#bccac7 54px,#bccac7 63px,#cbc6b8 63px,#cbc6b8 72px,#aeaeb1 72px,#aeaeb1 81px,#a9a6aa 81px,#a9a6aa 90px,#b8bbba 90px,#b8bbba 99px,#c3c2bb 99px,#c3c2bb 108px,#cdcdc8 108px,#cdcdc8 117px,#d2d3d5 117px,#d2d3d5 126px,#c3c2ba 126px,#c3c2ba 135px,#c8c0c8 135px,#c8c0c8 144px,#c6c2b2 144px,#c6c2b2 153px,#aeadac 153px,#aeadac 162px,#d3d3d5 162px,#d3d3d5 171px,#c8c8c8 171px,#c8c8c8 180px,#b5b9b8 180px,#b5b9b8 189px,#aba5a9 189px,#aba5a9 198px,#dadbd7 198px,#dadbd7 207px);opacity:0.6"></div>
<div class="vl" style="left:12px;top:470px;height:120px;background:#d3d3d8"></div>
<div class="hlin" style="left:12px;top:589px;width:871px;background:#d3d3d8"></div>
<div class="hlin" style="left:12px;top:470px;width:6px;background:#d3d3d8"></div>
<div class="hlin" style="left:123px;top:470px;width:747px;background:#d3d3d8"></div>
<div class="vl" style="left:882px;top:483px;height:107px;background:#d3d3d8"></div>
<div class="t b" style="left:21.74px;top:463.67px;transform:scaleX(0.9582);">Filename Patterns</div>
<div class="a" style="left:873px;top:466px;width:14px;height:14px"><svg width="14" height="14" viewBox="0 0 14 14"><path d="M10.6 3.4 A5.2 5.2 0 1 0 11.6 9.6" stroke="#555" stroke-width="1.25" fill="none"/><path d="M13 1.9V6H9.4z" fill="#555"/></svg></div>
<div class="inp" style="left:29px;top:487px;width:837px;height:26px"></div>
<div class="t " style="left:33.50px;top:493.17px;transform:scaleX(0.9049);">Photo {FSM} {CMMDDYYYY}</div>
<div class="btn" style="left:29px;top:521px;width:76px;height:22px"></div>
<div class="t " style="left:36.30px;top:524.77px;transform:scaleX(0.9379);color:#34be66">{C} Number</div>
<div class="btn" style="left:113px;top:521px;width:81px;height:22px"></div>
<div class="t " style="left:119.80px;top:524.77px;transform:scaleX(0.9197);color:#34be66">{N} Filename</div>
<div class="btn" style="left:202px;top:521px;width:132px;height:22px"></div>
<div class="t " style="left:208.90px;top:524.77px;transform:scaleX(0.9343);color:#34be66">{N*-*} Filename Range</div>
<div class="a" style="left:342px;top:521px;width:88px;height:22px;background:#1d2433;border-radius:2px"></div>
<div class="t " style="left:348.34px;top:525.37px;transform:scaleX(0.9553);color:#fff">More Patterns</div>
<div class="t " style="left:29.40px;top:559.87px;transform:scaleX(0.8359);">Case:</div>
<svg class="a" style="left:68.7px;top:559.4px" width="14" height="14" viewBox="0 0 14 14"><circle cx="7" cy="7" r="5.9" fill="#fff" stroke="#5f5f5f" stroke-width="1.1"/></svg>
<div class="t " style="left:85.90px;top:559.87px;transform:scaleX(0.9562);">Upper</div>
<svg class="a" style="left:137.79999999999998px;top:559.4px" width="14" height="14" viewBox="0 0 14 14"><circle cx="7" cy="7" r="5.9" fill="#fff" stroke="#5f5f5f" stroke-width="1.1"/></svg>
<div class="t " style="left:154.65px;top:559.87px;transform:scaleX(0.9458);">Lower</div>
<svg class="a" style="left:206.0px;top:559.8px" width="14" height="14" viewBox="0 0 14 14"><circle cx="7" cy="7" r="5.9" fill="#fff" stroke="#0b6cf5" stroke-width="1.3"/><circle cx="7" cy="7" r="3.7" fill="#0b6cf5"/></svg>
<div class="t " style="left:224.04px;top:559.87px;transform:scaleX(0.9606);">Not change</div>
<div class="vl" style="left:899px;top:470px;height:120px;background:#d3d3d8"></div>
<div class="hlin" style="left:899px;top:589px;width:450px;background:#d3d3d8"></div>
<div class="hlin" style="left:899px;top:470px;width:6px;background:#d3d3d8"></div>
<div class="hlin" style="left:1013px;top:470px;width:323px;background:#d3d3d8"></div>
<div class="vl" style="left:1348px;top:483px;height:107px;background:#d3d3d8"></div>
<div class="t b" style="left:908.24px;top:463.67px;transform:scaleX(0.9636);">Extension Patterns</div>
<div class="a" style="left:1339px;top:466px;width:14px;height:14px"><svg width="14" height="14" viewBox="0 0 14 14"><path d="M10.6 3.4 A5.2 5.2 0 1 0 11.6 9.6" stroke="#555" stroke-width="1.25" fill="none"/><path d="M13 1.9V6H9.4z" fill="#555"/></svg></div>
<div class="inp" style="left:916px;top:487px;width:416px;height:26px"></div>
<div class="t " style="left:920.70px;top:493.17px;transform:scaleX(0.8479);">{E}</div>
<div class="btn" style="left:916px;top:521px;width:81px;height:22px"></div>
<div class="t " style="left:923.30px;top:524.77px;transform:scaleX(0.8828);color:#34be66">{E} Extension</div>
<div class="btn" style="left:1005px;top:521px;width:133px;height:22px"></div>
<div class="t " style="left:1012.40px;top:524.77px;transform:scaleX(0.9141);color:#34be66">{E*-*} Extension Range</div>
<div class="t " style="left:916.20px;top:559.87px;transform:scaleX(0.8359);">Case:</div>
<svg class="a" style="left:955.7px;top:559.4px" width="14" height="14" viewBox="0 0 14 14"><circle cx="7" cy="7" r="5.9" fill="#fff" stroke="#5f5f5f" stroke-width="1.1"/></svg>
<div class="t " style="left:973.00px;top:559.87px;transform:scaleX(0.9562);">Upper</div>
<svg class="a" style="left:1024.8px;top:559.4px" width="14" height="14" viewBox="0 0 14 14"><circle cx="7" cy="7" r="5.9" fill="#fff" stroke="#5f5f5f" stroke-width="1.1"/></svg>
<div class="t " style="left:1041.85px;top:559.87px;transform:scaleX(0.9458);">Lower</div>
<svg class="a" style="left:1093.0px;top:559.8px" width="14" height="14" viewBox="0 0 14 14"><circle cx="7" cy="7" r="5.9" fill="#fff" stroke="#0b6cf5" stroke-width="1.3"/><circle cx="7" cy="7" r="3.7" fill="#0b6cf5"/></svg>
<div class="t " style="left:1110.94px;top:559.87px;transform:scaleX(0.9606);">Not change</div>
<div class="vl" style="left:12px;top:606px;height:160px;background:#d3d3d8"></div>
<div class="hlin" style="left:12px;top:765px;width:675px;background:#d3d3d8"></div>
<div class="hlin" style="left:12px;top:606px;width:6px;background:#d3d3d8"></div>
<div class="hlin" style="left:109px;top:606px;width:565px;background:#d3d3d8"></div>
<div class="vl" style="left:686px;top:619px;height:147px;background:#d3d3d8"></div>
<div class="t b" style="left:21.65px;top:599.67px;transform:scaleX(0.9473);">Replace Strings</div>
<div class="a" style="left:677px;top:602px;width:14px;height:14px"><svg width="14" height="14" viewBox="0 0 14 14"><path d="M10.6 3.4 A5.2 5.2 0 1 0 11.6 9.6" stroke="#555" stroke-width="1.25" fill="none"/><path d="M13 1.9V6H9.4z" fill="#555"/></svg></div>
<div class="a" style="left:29px;top:623px;width:641px;height:103px;background:#fff"></div>
<div class="a" style="left:29px;top:623px;width:641px;height:28px;background:#f0f0f0;border:1px solid #e2e2e6;border-bottom:0"></div>
<div class="hlin" style="left:29px;top:651px;width:641px;background:#d9d9dc"></div>
<div class="vl" style="left:242px;top:624px;height:27px;background:#e0e0e3"></div>
<div class="t b" style="left:34.51px;top:629.57px;transform:scaleX(0.8877);">Find Text</div>
<div class="t b" style="left:247.85px;top:629.57px;transform:scaleX(0.8492);">Replace To</div>
<div class="vl" style="left:703px;top:606px;height:160px;background:#d3d3d8"></div>
<div class="hlin" style="left:703px;top:765px;width:320px;background:#d3d3d8"></div>
<div class="hlin" style="left:703px;top:606px;width:6px;background:#d3d3d8"></div>
<div class="hlin" style="left:851px;top:606px;width:159px;background:#d3d3d8"></div>
<div class="vl" style="left:1022px;top:619px;height:147px;background:#d3d3d8"></div>
<div class="t b" style="left:712.30px;top:599.77px;transform:scaleX(1.0036);">Numbering Property</div>
<svg class="a" style="left:831px;top:600px" width="14" height="14" viewBox="0 0 14 14"><circle cx="7" cy="7" r="5.8" stroke="#222" stroke-width="1.2" fill="none"/><path d="M5.2 5.6a1.8 1.8 0 1 1 2.6 1.6c-.6.3-.8.6-.8 1.3" stroke="#222" stroke-width="1.1" fill="none"/><circle cx="7" cy="10.2" r=".7" fill="#222"/></svg>
<div class="a" style="left:1013px;top:602px;width:14px;height:14px"><svg width="14" height="14" viewBox="0 0 14 14"><path d="M10.6 3.4 A5.2 5.2 0 1 0 11.6 9.6" stroke="#555" stroke-width="1.25" fill="none"/><path d="M13 1.9V6H9.4z" fill="#555"/></svg></div>
<div class="t " style="left:720.40px;top:623.87px;transform:scaleX(0.9622);">Start from</div>
<div class="a" style="left:720px;top:642px;width:50px;height:20px;background:#fff;border:1px solid #e4e4e8"></div>
<div class="t " style="left:725.00px;top:644.57px;color:#a6a6c0">1</div>
<div class="t " style="left:824.64px;top:623.87px;transform:scaleX(0.9569);">Increment step</div>
<div class="a" style="left:825px;top:642px;width:50px;height:20px;background:#fff;border:1px solid #e4e4e8"></div>
<div class="t " style="left:830.00px;top:644.57px;color:#a6a6c0">1</div>
<div class="t " style="left:955.76px;top:623.87px;transform:scaleX(0.9416);">Padding</div>
<div class="a" style="left:956px;top:642px;width:50px;height:20px;background:#fff;border:1px solid #e4e4e8"></div>
<div class="t " style="left:961.00px;top:644.57px;color:#a6a6c0">3</div>
<div class="a" style="left:720px;top:678px;width:13px;height:13px;border:1px solid #656565;border-radius:2px;background:#fff"></div>
<div class="t " style="left:735.83px;top:677.67px;transform:scaleX(0.9700);">Numbering each file type</div>
<div class="a" style="left:720px;top:704px;width:13px;height:13px;border:1px solid #d8d8d8;border-radius:2px;background:#f3f3f3"></div>
<div class="t " style="left:735.82px;top:704.17px;transform:scaleX(0.9843);">No numbering for type with 1 file</div>
<div class="vl" style="left:1039px;top:606px;height:160px;background:#d3d3d8"></div>
<div class="hlin" style="left:1039px;top:765px;width:310px;background:#d3d3d8"></div>
<div class="hlin" style="left:1039px;top:606px;width:6px;background:#d3d3d8"></div>
<div class="hlin" style="left:1128px;top:606px;width:208px;background:#d3d3d8"></div>
<div class="vl" style="left:1348px;top:619px;height:147px;background:#d3d3d8"></div>
<div class="t b" style="left:1048.69px;top:599.87px;transform:scaleX(1.0111);">More Options</div>
<div class="a" style="left:1339px;top:602px;width:14px;height:14px"><svg width="14" height="14" viewBox="0 0 14 14"><path d="M10.6 3.4 A5.2 5.2 0 1 0 11.6 9.6" stroke="#555" stroke-width="1.25" fill="none"/><path d="M13 1.9V6H9.4z" fill="#555"/></svg></div>
<div class="a" style="left:1056px;top:624px;width:13px;height:13px;border:1px solid #656565;border-radius:2px;background:#fff"></div>
<div class="t " style="left:1072.60px;top:624.37px;transform:scaleX(0.9872);">Add '-' behind first number</div>
<div class="a" style="left:1056px;top:650px;width:13px;height:13px;border:1px solid #656565;border-radius:2px;background:#fff"></div>
<div class="t " style="left:1071.63px;top:650.17px;transform:scaleX(0.9663);">Delete number</div>
<div class="a" style="left:1056px;top:676px;width:13px;height:13px;border:1px solid #656565;border-radius:2px;background:#fff"></div>
<div class="t " style="left:1071.63px;top:676.27px;transform:scaleX(0.9710);">Delete non number</div>
<div class="a" style="left:1056px;top:701px;width:69px;height:20px;background:#fff;border:1px solid #e6e6ea;border-radius:2px"></div>
<div class="t " style="left:1061.10px;top:704.07px;transform:scaleX(0.9553);">Copy to</div>
<svg class="a" style="left:1108px;top:705px" width="14" height="12" viewBox="0 0 14 12"><path d="M2.6 4l4.4 4.1 4.4-4.1" stroke="#111" stroke-width="2" fill="none"/></svg>
<div class="a" style="left:1129px;top:701px;width:120px;height:20px;background:#f8f8fa;border:1px solid #e6e6ea;border-radius:2px"></div>
<div class="btn" style="left:1253px;top:701px;width:62px;height:20px"></div>
<div class="t " style="left:1264.20px;top:704.27px;transform:scaleX(0.9125);color:#34be66">Change</div>
<div class="hlin" style="left:0;top:778px;width:1361px;background:#d6d6da"></div>
<div class="btn red" style="left:12px;top:791px;width:73px;height:27px"></div>
<div class="t " style="left:32.57px;top:798.37px;transform:scaleX(0.9322);color:#e84646">Reset</div>
<div class="a" style="left:1225px;top:791px;width:124px;height:27px;background:#22c55e;border-radius:3px"></div>
<div class="t " style="left:1246.11px;top:798.37px;transform:scaleX(0.9898);color:#fff">Batch Rename</div>
<div class="shd" style="left:349px;top:551px;width:84px;height:100px"></div>
<div class="menu" style="left:343px;top:545px;width:88px;height:104px"></div>
<div class="a hl" style="left:344px;top:549px;width:86px;height:24px"></div>
<div class="t " style="left:367.55px;top:554.17px;transform:scaleX(0.9538);">File Info</div>
<div class="arr" style="left:421px;top:557px"></div>
<div class="t " style="left:367.54px;top:578.17px;transform:scaleX(0.9589);">Image</div>
<div class="arr" style="left:421px;top:581px"></div>
<div class="t " style="left:368.50px;top:602.17px;transform:scaleX(0.9651);">Audio</div>
<div class="arr" style="left:421px;top:605px"></div>
<div class="t " style="left:368.50px;top:626.17px;transform:scaleX(0.9436);">Video</div>
<div class="arr" style="left:421px;top:629px"></div>
<div class="shd" style="left:436px;top:551px;width:133px;height:207px"></div>
<div class="menu" style="left:430px;top:545px;width:137px;height:211px"></div>
<div class="a hl" style="left:431px;top:680px;width:135px;height:24px"></div>
<div class="t " style="left:454.91px;top:554.17px;transform:scaleX(0.8913);">File Size(Byte)</div>
<div class="t " style="left:454.93px;top:578.17px;transform:scaleX(0.8667);">File Size(KB)</div>
<div class="t " style="left:454.91px;top:602.17px;transform:scaleX(0.8911);">File Size(MB)</div>
<div class="t " style="left:454.94px;top:626.17px;transform:scaleX(0.8639);">File Size(GB)</div>
<div class="t " style="left:454.84px;top:650.17px;transform:scaleX(0.9584);">Directory Name</div>
<div class="hlin" style="left:432px;top:674px;width:133px;background:#dcdce2"></div>
<div class="t " style="left:455.60px;top:685.27px;transform:scaleX(0.9173);">Create Time</div>
<div class="arr" style="left:554px;top:688px"></div>
<div class="t " style="left:454.62px;top:709.27px;transform:scaleX(0.9827);">Modify Time</div>
<div class="arr" style="left:554px;top:712px"></div>
<div class="t " style="left:454.70px;top:733.27px;transform:scaleX(0.9020);">Last Access Time</div>
<div class="arr" style="left:554px;top:736px"></div>
<div class="shd" style="left:569px;top:682px;width:110px;height:170px"></div>
<div class="menu" style="left:563px;top:676px;width:113px;height:170px"></div>
<div class="a hl" style="left:564px;top:680px;width:111px;height:24px"></div>
<div class="t " style="left:587.71px;top:685.27px;transform:scaleX(0.8930);">MMDDYYYY</div>
<div class="t " style="left:587.68px;top:709.27px;transform:scaleX(0.9182);">MMDDYY</div>
<div class="hlin" style="left:566px;top:733px;width:108px;background:#dcdce2"></div>
<div class="t " style="left:588.60px;top:743.67px;transform:scaleX(0.8229);">Year (YYYY)</div>
<div class="t " style="left:588.60px;top:767.67px;transform:scaleX(0.8382);">Year (YY)</div>
<div class="t " style="left:587.57px;top:791.67px;transform:scaleX(1.0270);">Month</div>
<div class="t " style="left:587.67px;top:815.67px;transform:scaleX(0.9312);">Date</div>
</body></html>
